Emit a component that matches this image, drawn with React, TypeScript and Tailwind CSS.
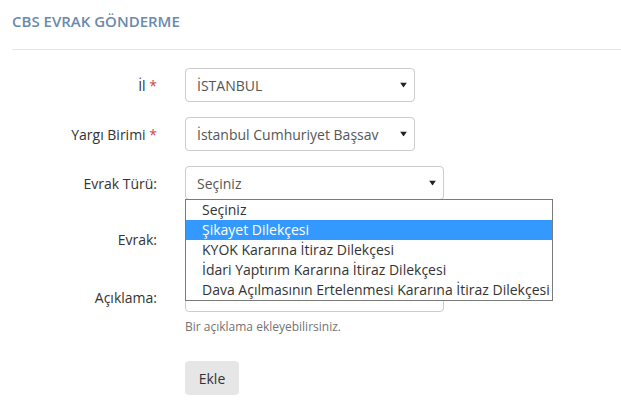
import React from "react";

const font = { fontFamily: '"Open Sans", "Liberation Sans", sans-serif' };

function Arrow() {
  return (
    <svg width="7" height="5" viewBox="0 0 7 5" className="absolute right-[7px] top-1/2 -translate-y-1/2">
      <path d="M0 0 L7 0 L3.5 5 Z" fill="#222" />
    </svg>
  );
}

function FakeSelect({ value, w }: { value: string; w: string }) {
  return (
    <div className={`relative h-[34px] ${w} rounded-[4px] border border-[#cccccc] bg-white`}>
      <div className="h-full flex items-center pl-[11px] pr-[24px] text-[14px] text-[#555] whitespace-nowrap overflow-hidden">
        {value}
      </div>
      <Arrow />
    </div>
  );
}

function Label({ text, req }: { text: string; req?: boolean }) {
  return (
    <div className="w-[173px] shrink-0 pr-[28px] text-right text-[14px] text-[#333]">
      {text}
      {req && <span className="text-[#c9484b]"> *</span>}
    </div>
  );
}

const options = [
  "Seçiniz",
  "Şikayet Dilekçesi",
  "KYOK Kararına İtiraz Dilekçesi",
  "İdari Yaptırım Kararına İtiraz Dilekçesi",
  "Dava Açılmasının Ertelenmesi Kararına İtiraz Dilekçesi",
];

export default function App() {
  return (
    <div className="w-[621px] h-[405px] bg-white pl-3 overflow-hidden" style={font}>
      <div className="pt-[11px] pb-[18px] border-b border-[#e5e5e5] mb-[18px]">
        <h1 className="text-[15px] leading-[20px] font-semibold text-[#6a8aad]">
          CBS EVRAK GÖNDERME
        </h1>
      </div>

      <div className="flex flex-col">
        <div className="flex items-center">
          <Label text="İl" req />
          <FakeSelect value="İSTANBUL" w="w-[230px]" />
        </div>
        <div className="flex items-center mt-[15px]">
          <Label text="Yargı Birimi" req />
          <FakeSelect value="İstanbul Cumhuriyet Başsav" w="w-[230px]" />
        </div>
        <div className="flex items-center mt-[15px] relative z-10">
          <Label text="Evrak Türü:" />
          <div className="relative">
            <FakeSelect value="Seçiniz" w="w-[259px]" />
            <div className="absolute left-0 top-[33px] w-[368px] border border-[#7a7a7a] bg-white py-0">
              {options.map((o, i) => (
                <div
                  key={o}
                  className={`h-[20px] leading-[20px] pl-[16px] text-[14px] whitespace-nowrap ${
                    i === 1 ? "bg-[#3399ff] text-white" : "text-[#333]"
                  }`}
                >
                  {o}
                </div>
              ))}
            </div>
          </div>
        </div>
        <div className="flex items-center mt-[22px]">
          <Label text="Evrak:" />
          <div className="h-[34px] w-[259px] rounded-[4px] border border-[#cccccc] bg-white" />
        </div>
        <div className="flex items-start mt-[24px]">
          <div className="pt-[7px]">
            <Label text="Açıklama:" />
          </div>
          <div className="flex flex-col">
            <div className="h-[32px] w-[259px] rounded-[4px] border border-[#cccccc] bg-white" />
            <div className="mt-[6px] text-[12px] leading-[17px] text-[#737373]">
              Bir açıklama ekleyebilirsiniz.
            </div>
            <button className="mt-[26px] w-[54px] h-[34px] rounded-[4px] bg-[#e6e6e6] text-[14px] text-[#333]">
              Ekle
            </button>
          </div>
        </div>
      </div>
    </div>
  );
}
